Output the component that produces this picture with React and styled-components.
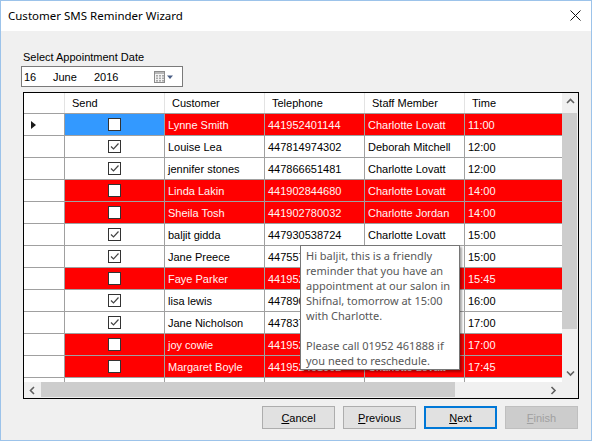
import React from "react";
import styled, { createGlobalStyle } from "styled-components";

const GlobalStyle = createGlobalStyle`
	html, body {
		margin: 0;
		padding: 0;
		background: #f0f0f0;
	}
	* {
		box-sizing: border-box;
	}
`;

const appointments = [
	{ name: "Lynne Smith", phone: "441952401144", staff: "Charlotte Lovatt", time: "11:00", blocked: true, send: false },
	{ name: "Louise Lea", phone: "447814974302", staff: "Deborah Mitchell", time: "12:00", blocked: false, send: true },
	{ name: "jennifer stones", phone: "447866651481", staff: "Charlotte Lovatt", time: "12:00", blocked: false, send: true },
	{ name: "Linda Lakin", phone: "441902844680", staff: "Charlotte Lovatt", time: "14:00", blocked: true, send: false },
	{ name: "Sheila Tosh", phone: "441902780032", staff: "Charlotte Jordan", time: "14:00", blocked: true, send: false },
	{ name: "baljit gidda", phone: "447930538724", staff: "Charlotte Lovatt", time: "15:00", blocked: false, send: true },
	{ name: "Jane Preece", phone: "447557182936", staff: "Charlotte Lovatt", time: "15:00", blocked: false, send: true },
	{ name: "Faye Parker", phone: "441952460571", staff: "Charlotte Lovatt", time: "15:45", blocked: true, send: false },
	{ name: "lisa lewis", phone: "447890214417", staff: "Charlotte Lovatt", time: "16:00", blocked: false, send: true },
	{ name: "Jane Nicholson", phone: "447837620958", staff: "Charlotte Lovatt", time: "17:00", blocked: false, send: true },
	{ name: "joy cowie", phone: "441952463310", staff: "Charlotte Lovatt", time: "17:00", blocked: true, send: false },
	{ name: "Margaret Boyle", phone: "441952461002", staff: "Charlotte Lovatt", time: "17:45", blocked: true, send: false },
];

const columns = ["Send", "Customer", "Telephone", "Staff Member", "Time"];

const CalendarIcon = () => (
	<svg width="20" height="12" viewBox="0 0 20 12">
		<rect x="0.5" y="0.5" width="10" height="11" fill="#f4f4f4" stroke="#8c8c8c" />
		<rect x="1" y="1" width="9" height="2" fill="#b8b8b8" />
		{[0, 1, 2].map((r) =>
			[0, 1, 2].map((c) => (
				<rect key={`${r}-${c}`} x={2 + c * 3} y={4 + r * 2.5} width="2" height="1.6" fill="#a9a9a9" />
			))
		)}
		<path d="M13 4.5 L19 4.5 L16 8 Z" fill="#4b5f86" />
	</svg>
);

const CloseIcon = () => (
	<svg width="11" height="11" viewBox="0 0 11 11">
		<path d="M0.5 0.5 L10.5 10.5 M10.5 0.5 L0.5 10.5" stroke="#111" strokeWidth="1" fill="none" />
	</svg>
);

const Chevron = ({ dir }) => {
	const paths = {
		up: "M1 6 L4.5 2.5 L8 6",
		down: "M1 2.5 L4.5 6 L8 2.5",
		left: "M6 1 L2.5 4.5 L6 8",
		right: "M2.5 1 L6 4.5 L2.5 8",
	};
	return (
		<svg width="9" height="9" viewBox="0 0 9 9">
			<path d={paths[dir]} stroke="#606060" strokeWidth="1.6" fill="none" />
		</svg>
	);
};

const CheckBox = ({ checked }) => (
	<Box>
		{checked && (
			<svg width="11" height="11" viewBox="0 0 11 11">
				<path d="M2 5.5 L4.5 8 L9.5 2.5" stroke="#444" strokeWidth="1.2" fill="none" />
			</svg>
		)}
	</Box>
);

const Underlined = ({ text }) => (
	<>
		<u>{text[0]}</u>
		{text.slice(1)}
	</>
);

const App = () => {
	return (
		<>
			<GlobalStyle />
			<Window>
				<TitleBar>
					<Title>Customer SMS Reminder Wizard</Title>
					<CloseButton>
						<CloseIcon />
					</CloseButton>
				</TitleBar>

				<Body>
					<Label>Select Appointment Date</Label>
					<DatePicker>
						<DatePart $width={29}>16</DatePart>
						<DatePart $width={41}>June</DatePart>
						<DatePart $width={60}>2016</DatePart>
						<CalendarIcon />
					</DatePicker>

					<Grid>
						<DataArea>
							<HeaderRow>
								<HeaderCorner />
								{columns.map((c) => (
									<HeaderCell key={c}>{c}</HeaderCell>
								))}
							</HeaderRow>
							{appointments.map((a, i) => (
								<Row key={i}>
									<RowHeader>{i === 0 && <CurrentArrow />}</RowHeader>
									<CheckCell $blocked={a.blocked} $selected={i === 0}>
										<CheckBox checked={a.send} />
									</CheckCell>
									<Cell $blocked={a.blocked}>{a.name}</Cell>
									<Cell $blocked={a.blocked}>{a.phone}</Cell>
									<Cell $blocked={a.blocked}>{a.staff}</Cell>
									<Cell $blocked={a.blocked}>{a.time}</Cell>
								</Row>
							))}
							{/* next row, scrolled mostly out of view */}
							<Row>
								<RowHeader />
								<CheckCell />
								<Cell />
								<Cell />
								<Cell />
								<Cell />
							</Row>
						</DataArea>

						<VScroll>
							<ArrowBox $vertical>
								<Chevron dir="up" />
							</ArrowBox>
							<VThumb />
							<Spacer />
							<ArrowBox $vertical>
								<Chevron dir="down" />
							</ArrowBox>
						</VScroll>

						<HScroll>
							<ArrowBox>
								<Chevron dir="left" />
							</ArrowBox>
							<HThumb />
							<Spacer />
							<ArrowBox>
								<Chevron dir="right" />
							</ArrowBox>
						</HScroll>
						<Corner />

						<Tooltip>
							{`Hi baljit, this is a friendly
reminder that you have an
appointment at our salon in
Shifnal, tomorrow at 15:00
with Charlotte.

Please call 01952 461888 if
you need to reschedule.`}
						</Tooltip>
					</Grid>

					<ButtonRow>
						<Button>
							<Underlined text="Cancel" />
						</Button>
						<Button>
							<Underlined text="Previous" />
						</Button>
						<Button $default>
							<Underlined text="Next" />
						</Button>
						<Button disabled>
							<Underlined text="Finish" />
						</Button>
					</ButtonRow>
				</Body>
			</Window>
		</>
	);
};

export default App;

const Window = styled.div`
	width: 592px;
	height: 441px;
	border: 1px solid #9cc3ea;
	display: flex;
	flex-direction: column;
	background: #f0f0f0;
`;

const TitleBar = styled.div`
	height: 30px;
	background: #ffffff;
	display: flex;
	align-items: center;
	justify-content: space-between;
	padding: 0 10px 0 7px;
`;

const Title = styled.span`
	font-family: "Segoe UI", "Noto Sans", sans-serif;
	font-size: 11.5px;
	color: #000;
	margin-top: -1px;
`;

const CloseButton = styled.span`
	display: flex;
	align-items: center;
	margin-top: -2px;
`;

const Body = styled.div`
	flex: 1;
	display: flex;
	flex-direction: column;
	padding: 20px 13px 0 20px;
	font-family: "Liberation Sans", Arial, sans-serif;
	font-size: 11px;
	color: #000;
`;

const Label = styled.div`
	line-height: 13px;
	padding-left: 2px;
`;

const DatePicker = styled.div`
	margin-top: 2px;
	width: 162px;
	height: 21px;
	background: #fff;
	border: 1px solid #7a7a7a;
	display: flex;
	align-items: center;
	padding-left: 2px;
`;

const DatePart = styled.span`
	width: ${(p) => p.$width}px;
	color: #000;
`;

const Grid = styled.div`
	position: relative;
	margin: 5px 0 0 2px;
	width: 556px;
	height: 307px;
	border: 1px solid #000;
	background: #f0f0f0;
	display: grid;
	grid-template-columns: 538px 16px;
	grid-template-rows: 289px 16px;
`;

const DataArea = styled.div`
	overflow: hidden;
	background: #fff;
`;

const rowColumns = `
	display: grid;
	grid-template-columns: 41px repeat(5, 100px);
`;

const HeaderRow = styled.div`
	${rowColumns}
	height: 21px;
	border-bottom: 1px solid #a0a0a0;
	background: #fff;
`;

const HeaderCorner = styled.div`
	border-right: 1px solid #e3e3e3;
`;

const HeaderCell = styled.div`
	border-right: 1px solid #e3e3e3;
	padding-left: 7px;
	display: flex;
	align-items: center;
	white-space: nowrap;
`;

const Row = styled.div`
	${rowColumns}
	height: 22px;
`;

const baseCell = `
	border-right: 1px solid #a0a0a0;
	border-bottom: 1px solid #a0a0a0;
	display: flex;
	align-items: center;
	white-space: nowrap;
	overflow: hidden;
`;

const RowHeader = styled.div`
	${baseCell}
	background: #fff;
	padding-left: 7px;
`;

const CurrentArrow = styled.span`
	width: 0;
	height: 0;
	border-top: 4px solid transparent;
	border-bottom: 4px solid transparent;
	border-left: 5px solid #1a1a1a;
`;

const Cell = styled.div`
	${baseCell}
	padding-left: 3px;
	background: ${(p) => (p.$blocked ? "#ff0000" : "#fff")};
	color: ${(p) => (p.$blocked ? "#fff4f4" : "#000")};
`;

const CheckCell = styled.div`
	${baseCell}
	justify-content: center;
	background: ${(p) => (p.$selected ? "#3399ff" : p.$blocked ? "#ff0000" : "#fff")};
`;

const Box = styled.span`
	width: 13px;
	height: 13px;
	border: 1px solid #333;
	background: #fff;
	display: flex;
	align-items: center;
	justify-content: center;
`;

const VScroll = styled.div`
	display: flex;
	flex-direction: column;
	background: #f0f0f0;
`;

const HScroll = styled.div`
	display: flex;
	background: #f0f0f0;
`;

const ArrowBox = styled.div`
	width: ${(p) => (p.$vertical ? "16px" : "17px")};
	height: ${(p) => (p.$vertical ? "17px" : "16px")};
	display: flex;
	align-items: center;
	justify-content: center;
	flex-shrink: 0;
`;

const VThumb = styled.div`
	margin: 3px 1px 0 0;
	height: 216px;
	background: #cdcdcd;
`;

const HThumb = styled.div`
	width: 414px;
	margin-bottom: 1px;
	background: #cdcdcd;
`;

const Spacer = styled.div`
	flex: 1;
`;

const Corner = styled.div`
	background: #f0f0f0;
`;

const Tooltip = styled.div`
	position: absolute;
	left: 276px;
	top: 152px;
	width: 160px;
	height: 125px;
	background: #fff;
	border: 1px solid #767676;
	box-shadow: 2px 2px 2px rgba(0, 0, 0, 0.35);
	padding: 2px 5px;
	font-family: "Segoe UI", "Noto Sans", sans-serif;
	font-size: 11px;
	line-height: 15px;
	color: #575757;
	white-space: pre-line;
`;

const ButtonRow = styled.div`
	margin-top: 7px;
	display: flex;
	justify-content: flex-end;
	gap: 8px;
`;

const Button = styled.button`
	width: 73px;
	height: 23px;
	padding: 0;
	font-family: "Liberation Sans", Arial, sans-serif;
	font-size: 11px;
	color: #000;
	background: #e1e1e1;
	border: ${(p) => (p.$default ? "2px solid #0078d7" : "1px solid #adadad")};

	&:disabled {
		background: #cccccc;
		border-color: #bfbfbf;
		color: #a0a0a0;
	}
`;
